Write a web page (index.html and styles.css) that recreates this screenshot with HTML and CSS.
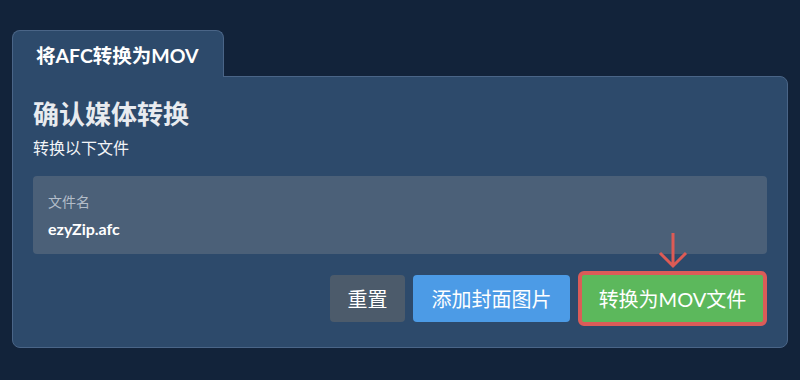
FILE: index.html
```html
<!DOCTYPE html>
<html lang="zh">
  <head>
    <meta charset="UTF-8" />
    <meta name="viewport" content="width=device-width, initial-scale=1.0" />
    <title>将AFC转换为MOV</title>
    <link rel="stylesheet" href="styles.css">
  </head>
  <body>
    <div class="tabs">
      <div class="tab">将AFC转换为MOV</div>
    </div>

    <div class="panel">
      <h2>确认媒体转换</h2>
      <p class="subtitle">转换以下文件</p>

      <div class="file-box">
        <div class="file-label">文件名</div>
        <div class="file-name">ezyZip.afc</div>
      </div>

      <div class="actions">
        <button class="btn btn-reset">重置</button>
        <button class="btn btn-cover">添加封面图片</button>
        <div class="convert-wrap">
          <svg class="arrow" width="30" height="38" viewBox="0 0 30 38">
            <path d="M15 2 V35 M2 22 L15 35 L28 22" fill="none" stroke="#dd5b55" stroke-width="3" />
          </svg>
          <button class="btn btn-convert">转换为MOV文件</button>
        </div>
      </div>
    </div>
  </body>
</html>
```

FILE: styles.css
```css
* {
  box-sizing: border-box;
}

body {
  margin: 0;
  padding: 30px 12px 0;
  background: #12233a;
  font-family: "Lato", "Noto Sans CJK SC", sans-serif;
  color: #e9edf2;
}

.tabs {
  display: flex;
}

.tab {
  width: 212px;
  height: 47px;
  margin-bottom: -1px;
  padding: 0 0 0 23px;
  display: flex;
  align-items: center;
  white-space: nowrap;
  background: #2d4a6b;
  border: 1px solid #4a6587;
  border-bottom: none;
  border-radius: 8px 8px 0 0;
  color: #ffffff;
  font-size: 19.5px;
  font-weight: bold;
  position: relative;
  z-index: 1;
}

.panel {
  height: 272px;
  padding: 20px 20px 20px;
  background: #2d4a6b;
  border: 1px solid #4a6587;
  border-radius: 0 8px 8px 8px;
}

h2 {
  margin: 0;
  font-size: 26px;
  line-height: 34px;
  font-weight: bold;
  color: #e8ebef;
}

.subtitle {
  margin: 5px 0 0;
  font-size: 16px;
  line-height: 24px;
  color: #f2f4f7;
}

.file-box {
  margin-top: 16px;
  height: 78px;
  padding: 16px 15px;
  background: #4b6078;
  border-radius: 4px;
}

.file-label {
  font-size: 14px;
  line-height: 20px;
  color: #b3bdc9;
}

.file-name {
  margin-top: 6px;
  font-size: 16px;
  line-height: 22px;
  font-weight: bold;
  color: #ffffff;
}

.actions {
  margin-top: 17px;
  display: flex;
  justify-content: flex-end;
  align-items: center;
  gap: 8px;
}

.btn {
  height: 47px;
  padding: 0;
  border: none;
  border-radius: 4px;
  font-family: inherit;
  font-size: 20px;
  color: #ffffff;
  cursor: pointer;
}

.btn-reset {
  width: 75px;
  background: #4c5b6b;
}

.btn-cover {
  width: 157px;
  background: #4c9be6;
}

.convert-wrap {
  position: relative;
}

.btn-convert {
  display: block;
  width: 189px;
  height: 55px;
  background: #5cb85c;
  border: 4px solid #db5c58;
  border-radius: 6px;
}

.arrow {
  position: absolute;
  left: 80px;
  top: -40px;
}
```
